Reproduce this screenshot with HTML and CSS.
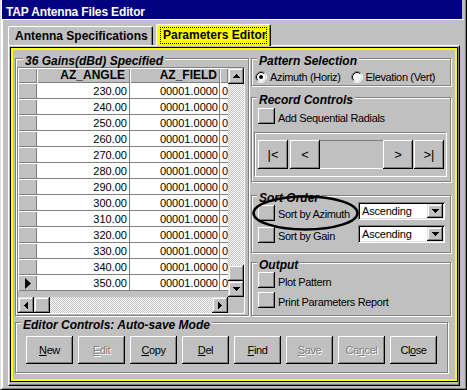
FILE: index.html
```html
<!DOCTYPE html>
<html>
<head>
<meta charset="utf-8">
<title>TAP Antenna Files Editor</title>
<link rel="stylesheet" href="styles.css">
</head>
<body>
<div class="window">
  <div class="titlebar">TAP Antenna Files Editor</div>
  <div class="client">
    <div class="tabs">
      <div class="tab">Antenna Specifications</div>
      <div class="tab active"><span class="focus">Parameters Editor</span></div>
    </div>
    <div class="page">
      <div class="yframe">
        <div class="inner">
          <div class="top">
            <section class="group gains">
              <div class="glabel">36 Gains(dBd) Specified</div>
              <div class="grid">
                <div class="gridmain">
                  <div class="cells">
                    <div class="row head"><div class="sel"></div><div class="cell c1">AZ_ANGLE</div><div class="cell c2">AZ_FIELD</div><div class="cell c3"></div></div>
                    <div class="row"><div class="sel"></div><div class="cell c1">230.00</div><div class="cell c2">00001.0000</div><div class="cell c3">00001.0000</div></div>
                    <div class="row"><div class="sel"></div><div class="cell c1">240.00</div><div class="cell c2">00001.0000</div><div class="cell c3">00001.0000</div></div>
                    <div class="row"><div class="sel"></div><div class="cell c1">250.00</div><div class="cell c2">00001.0000</div><div class="cell c3">00001.0000</div></div>
                    <div class="row"><div class="sel"></div><div class="cell c1">260.00</div><div class="cell c2">00001.0000</div><div class="cell c3">00001.0000</div></div>
                    <div class="row"><div class="sel"></div><div class="cell c1">270.00</div><div class="cell c2">00001.0000</div><div class="cell c3">00001.0000</div></div>
                    <div class="row"><div class="sel"></div><div class="cell c1">280.00</div><div class="cell c2">00001.0000</div><div class="cell c3">00001.0000</div></div>
                    <div class="row"><div class="sel"></div><div class="cell c1">290.00</div><div class="cell c2">00001.0000</div><div class="cell c3">00001.0000</div></div>
                    <div class="row"><div class="sel"></div><div class="cell c1">300.00</div><div class="cell c2">00001.0000</div><div class="cell c3">00001.0000</div></div>
                    <div class="row"><div class="sel"></div><div class="cell c1">310.00</div><div class="cell c2">00001.0000</div><div class="cell c3">00001.0000</div></div>
                    <div class="row"><div class="sel"></div><div class="cell c1">320.00</div><div class="cell c2">00001.0000</div><div class="cell c3">00001.0000</div></div>
                    <div class="row"><div class="sel"></div><div class="cell c1">330.00</div><div class="cell c2">00001.0000</div><div class="cell c3">00001.0000</div></div>
                    <div class="row"><div class="sel"></div><div class="cell c1">340.00</div><div class="cell c2">00001.0000</div><div class="cell c3">00001.0000</div></div>
                    <div class="row"><div class="sel"><svg width="6" height="11" viewBox="0 0 6 11"><path d="M0 0L6 5.5L0 11Z" fill="#000"/></svg></div><div class="cell c1">350.00</div><div class="cell c2">00001.0000</div><div class="cell c3">00001.0000</div></div>
                  </div>
                  <div class="hscroll">
                    <div class="sbtn"><svg width="4" height="7" viewBox="0 0 4 7"><path d="M3 0H4V7H3V6H2V5H1V4H0V3H1V2H2V1H3Z" fill="#000"/></svg></div>
                    <div class="sbtn"></div>
                    <div class="track"></div>
                    <div class="sbtn"><svg width="4" height="7" viewBox="0 0 4 7"><path d="M0 0H1V1H2V2H3V3H4V4H3V5H2V6H1V7H0Z" fill="#000"/></svg></div>
                  </div>
                </div>
                <div class="vscroll">
                  <div class="sbtn"><svg width="7" height="4" viewBox="0 0 7 4"><path d="M3 0H4V1H5V2H6V3H7V4H0V3H1V2H2V1H3Z" fill="#000"/></svg></div>
                  <div class="track"></div>
                  <div class="sbtn"></div>
                  <div class="sbtn"><svg width="7" height="4" viewBox="0 0 7 4"><path d="M0 0H7V1H6V2H5V3H4V4H3V3H2V2H1V1H0Z" fill="#000"/></svg></div>
                  <div class="corner"></div>
                </div>
              </div>
            </section>
            <div class="rightcol">
              <section class="group pattern">
                <div class="glabel">Pattern Selection</div>
                <div class="radios">
                  <svg class="radio" width="12" height="12" viewBox="0 0 12 12"><circle cx="6" cy="6" r="4.5" fill="#fff"/><path d="M2.11 9.89A5.5 5.5 0 0 1 9.89 2.11" fill="none" stroke="#808080"/><path d="M9.89 2.11A5.5 5.5 0 0 1 2.11 9.89" fill="none" stroke="#fff"/><path d="M2.82 9.18A4.5 4.5 0 0 1 9.18 2.82" fill="none" stroke="#000"/><path d="M9.18 2.82A4.5 4.5 0 0 1 2.82 9.18" fill="none" stroke="#dfdfdf"/><circle cx="6" cy="6" r="2" fill="#000"/></svg>
                  <span class="rlabel">Azimuth (Horiz)</span>
                  <svg class="radio second" width="12" height="12" viewBox="0 0 12 12"><circle cx="6" cy="6" r="4.5" fill="#fff"/><path d="M2.11 9.89A5.5 5.5 0 0 1 9.89 2.11" fill="none" stroke="#808080"/><path d="M9.89 2.11A5.5 5.5 0 0 1 2.11 9.89" fill="none" stroke="#fff"/><path d="M2.82 9.18A4.5 4.5 0 0 1 9.18 2.82" fill="none" stroke="#000"/><path d="M9.18 2.82A4.5 4.5 0 0 1 2.82 9.18" fill="none" stroke="#dfdfdf"/></svg>
                  <span class="rlabel">Elevation (Vert)</span>
                </div>
              </section>
              <section class="group record">
                <div class="glabel">Record Controls</div>
                <div class="chk first"><span class="box"></span><span class="clabel">Add Sequential Radials</span></div>
                <div class="nav">
                  <div class="nbtn">|&lt;</div>
                  <div class="nbtn prev">&lt;</div>
                  <div class="mid"></div>
                  <div class="nbtn">&gt;</div>
                  <div class="nbtn last">&gt;|</div>
                </div>
              </section>
              <section class="group sort">
                <div class="glabel">Sort Order</div>
                <div class="srow first">
                  <span class="box"></span><span class="slabel">Sort by Azimuth</span>
                  <div class="select"><span class="stext">Ascending</span><span class="sarrow"><svg width="7" height="4" viewBox="0 0 7 4"><path d="M0 0H7V1H6V2H5V3H4V4H3V3H2V2H1V1H0Z" fill="#000"/></svg></span></div>
                </div>
                <div class="srow second">
                  <span class="box"></span><span class="slabel">Sort by Gain</span>
                  <div class="select"><span class="stext">Ascending</span><span class="sarrow"><svg width="7" height="4" viewBox="0 0 7 4"><path d="M0 0H7V1H6V2H5V3H4V4H3V3H2V2H1V1H0Z" fill="#000"/></svg></span></div>
                </div>
              </section>
              <section class="group output">
                <div class="glabel">Output</div>
                <div class="chk first"><span class="box"></span><span class="clabel">Plot Pattern</span></div>
                <div class="chk next"><span class="box"></span><span class="clabel">Print Parameters Report</span></div>
              </section>
              <svg class="oval" width="107" height="36" viewBox="0 0 107 36"><ellipse cx="53.5" cy="18" rx="52" ry="16.5" fill="none" stroke="#000" stroke-width="2.5"/></svg>
            </div>
          </div>
          <section class="group editor">
            <div class="glabel">Editor Controls: Auto-save Mode</div>
            <div class="btns">
              <div class="btn"><u>N</u>ew</div>
              <div class="btn off"><u>E</u>dit</div>
              <div class="btn"><u>C</u>opy</div>
              <div class="btn"><u>D</u>el</div>
              <div class="btn"><u>F</u>ind</div>
              <div class="btn off"><u>S</u>ave</div>
              <div class="btn off">Ca<u>n</u>cel</div>
              <div class="btn">Cl<u>o</u>se</div>
            </div>
          </section>
        </div>
      </div>
    </div>
  </div>
</div>
</body>
</html>
```
FILE: styles.css
```css
* { box-sizing: border-box; }
html, body { margin: 0; padding: 0; }
body {
  background: #c0c0c0;
  font-family: "Liberation Sans", Arial, sans-serif;
  font-size: 11px;
  color: #000;
  width: 467px;
  height: 390px;
  overflow: hidden;
}
.window {
  width: 467px;
  height: 390px;
  background: #c0c0c0;
  border-left: 1px solid #dfdfdf;
  border-right: 1px solid #000;
  border-bottom: 1px solid #000;
  box-shadow: inset 1px 0 0 #fff, inset -1px -1px 0 #808080;
}
.titlebar {
  margin-left: 1px;
  width: 460px;
  height: 19px;
  background: #000080;
  color: #fff;
  font-weight: bold;
  font-size: 12px;
  line-height: 14px;
  padding: 5px 0 0 4px;
  letter-spacing: -0.15px;
  white-space: nowrap;
}
.client {
  margin-left: 1px;
  width: 462px;
  height: 369px;
  border-top: 1px solid #fff;
  border-left: 1px solid #fff;
}
.tabs {
  display: flex;
  align-items: flex-end;
  height: 25px;
  padding: 4px 0 0 5px;
}
.tab {
  width: 145px;
  height: 19px;
  border: 1px solid #fff;
  border-right-color: #000;
  border-bottom: none;
  border-radius: 2px 2px 0 0;
  box-shadow: inset -1px 0 0 #808080;
  font-size: 12px;
  font-weight: bold;
  line-height: 17px;
  padding: 1px 0 0 6px;
  white-space: nowrap;
}
.tab.active {
  width: 115px;
  height: 22px;
  margin-left: 3px;
  margin-bottom: -1px;
  background: #ffff00;
  position: relative;
  z-index: 1;
  padding: 2px 0 0 3px;
}
.focus {
  display: block;
  width: 107px;
  height: 17px;
  border: 1px dotted #000;
  line-height: 15px;
  padding-left: 2px;
}
.page {
  margin-left: 5px;
  width: 452px;
  height: 341px;
  border-top: 1px solid #fff;
  border-left: 1px solid #fff;
  border-right: 1px solid #000;
  border-bottom: 1px solid #000;
  box-shadow: inset -1px -1px 0 #808080;
  padding: 2px 0 0 2px;
}
.yframe {
  width: 446px;
  height: 333px;
  border: 2px solid #ffff00;
  outline: 1px solid #000;
}
.inner { padding-left: 2px; }
.top { display: flex; height: 266px; }

.group {
  border: 1px solid #808080;
  box-shadow: inset 1px 1px 0 #fff, 1px 1px 0 #fff;
}
.glabel {
  width: fit-content;
  height: 12px;
  margin: -4px 0 0 5px;
  padding: 0 2px;
  font-size: 12px;
  line-height: 12px;
  font-weight: bold;
  font-style: italic;
  background: #c0c0c0;
  white-space: nowrap;
}
.gains { width: 234px; height: 258px; margin-top: 8px; flex: none; }
.gains .glabel { margin-left: 7px; }

.grid {
  margin: 0 0 0 1px;
  width: 228px;
  height: 247px;
  border: 1px solid;
  border-color: #808080 #fff #fff #808080;
  display: flex;
}
.gridmain { width: 210px; display: flex; flex-direction: column; }
.cells { height: 229px; flex: none; overflow: hidden; background: #c0c0c0; }
.row { display: flex; height: 16px; }
.row.head { height: 15px; }
.sel {
  width: 19px;
  flex: none;
  background: #c0c0c0;
  box-shadow: inset 1px 1px 0 #fff, inset -1px -1px 0 #808080;
  display: flex;
  align-items: center;
  justify-content: center;
}
.cell {
  background: #fff;
  border-right: 1px solid #808080;
  border-bottom: 1px solid #808080;
  text-align: right;
  line-height: 14px;
  padding-top: 1px;
  white-space: nowrap;
  overflow: hidden;
  flex: none;
}
.c1 { width: 93px; padding-right: 2px; }
.c2 { width: 90px; padding-right: 1px; }
.c3 { flex: 1; border-right: none; text-align: left; padding-left: 2px; }
.head .cell {
  background: #c0c0c0;
  border: none;
  box-shadow: inset 1px 1px 0 #fff, inset -1px -1px 0 #808080;
  font-weight: bold;
  font-size: 12px;
  line-height: 14px;
  padding-top: 0;
}
.head .c1 { padding-right: 5px; }
.head .c2 { padding-right: 3px; }

.hscroll { height: 16px; display: flex; }
.vscroll { width: 16px; display: flex; flex-direction: column; }
.sbtn {
  width: 16px;
  height: 16px;
  flex: none;
  background: #c0c0c0;
  box-shadow: inset -1px -1px 0 #000, inset 1px 1px 0 #dfdfdf, inset -2px -2px 0 #808080, inset 2px 2px 0 #fff;
  display: flex;
  align-items: center;
  justify-content: center;
}
.sbtn svg { display: block; }
.track {
  flex: 1;
  background: repeating-conic-gradient(#c0c0c0 0 25%, #fff 0 50%) 0 0 / 2px 2px;
}
.corner { height: 16px; flex: none; background: #c0c0c0; }

.rightcol {
  width: 200px;
  flex: none;
  margin-left: 2px;
  position: relative;
}
.pattern { height: 28px; margin-top: 8px; }
.record { height: 85px; margin-top: 11px; }
.sort { height: 58px; margin-top: 13px; }
.output { height: 54px; margin-top: 9px; }

.radios {
  display: flex;
  align-items: center;
  margin: 3px 0 0 3px;
  height: 14px;
  line-height: 14px;
  letter-spacing: -0.35px;
  white-space: nowrap;
}
.radio { flex: none; display: block; margin-right: 3px; }
.radio.second { margin-left: 10px; }

.box {
  display: block;
  width: 17px;
  height: 16px;
  flex: none;
  background: #c0c0c0;
  box-shadow: inset -1px -1px 0 #000, inset 1px 1px 0 #fff, inset -2px -2px 0 #808080;
}
.chk { display: flex; margin-left: 6px; height: 16px; }
.chk.first { margin-top: 2px; }
.output .chk.first { margin-top: 1px; }
.chk.next { margin-top: 4px; }
.clabel {
  margin-left: 3px;
  padding-top: 3px;
  line-height: 14px;
  letter-spacing: -0.35px;
  white-space: nowrap;
}

.nav {
  margin: 8px 0 0 2px;
  width: 193px;
  height: 45px;
  border: 1px solid;
  border-color: #808080 #fff #fff #808080;
  box-shadow: inset 1px 1px 0 #fff;
  display: flex;
  padding: 7px 0 0 3px;
}
.nbtn {
  width: 30px;
  height: 29px;
  flex: none;
  background: #c0c0c0;
  box-shadow: inset -1px -1px 0 #000, inset 1px 1px 0 #fff, inset -2px -2px 0 #808080;
  font-size: 13px;
  line-height: 29px;
  text-align: center;
}
.nbtn.prev { margin-left: 2px; }
.nbtn.last { margin-left: 1px; }
.mid {
  width: 63px;
  height: 29px;
  flex: none;
  border-top: 1px solid #808080;
  border-bottom: 1px solid #fff;
}

.srow { display: flex; height: 20px; margin-left: 6px; }
.srow.first { margin-top: -2px; }
.srow.second { margin-top: 2px; }
.srow .box { margin-top: 3px; }
.slabel {
  width: 80px;
  flex: none;
  margin-left: 3px;
  padding-top: 5px;
  line-height: 14px;
  letter-spacing: -0.35px;
  white-space: nowrap;
}
.select {
  width: 87px;
  height: 18px;
  flex: none;
  background: #fff;
  box-shadow: inset 1px 1px 0 #808080, inset -1px -1px 0 #fff, inset 2px 2px 0 #000, inset -2px -2px 0 #dfdfdf;
  display: flex;
  padding: 2px;
}
.srow.second .select { margin-top: 1px; }
.stext { flex: 1; padding-left: 2px; line-height: 14px; letter-spacing: -0.2px; }
.sarrow {
  width: 16px;
  height: 14px;
  flex: none;
  background: #c0c0c0;
  box-shadow: inset -1px -1px 0 #000, inset 1px 1px 0 #dfdfdf, inset -2px -2px 0 #808080, inset 2px 2px 0 #fff;
  display: flex;
  align-items: center;
  justify-content: center;
}
.sarrow svg { display: block; }

.oval {
  position: absolute;
  left: 1px;
  top: 145px;
  pointer-events: none;
}

.editor { width: 433px; height: 51px; margin-top: 6px; }
.btns { display: flex; gap: 5px; margin: 5px 0 0 10px; }
.btn {
  width: 47px;
  height: 28px;
  flex: none;
  background: #c0c0c0;
  box-shadow: inset -1px -1px 0 #000, inset 1px 1px 0 #fff, inset -2px -2px 0 #808080;
  line-height: 28px;
  text-align: center;
  letter-spacing: -0.4px;
}
.btn.off { color: #808080; text-shadow: 1px 1px 0 #fff; }
```
